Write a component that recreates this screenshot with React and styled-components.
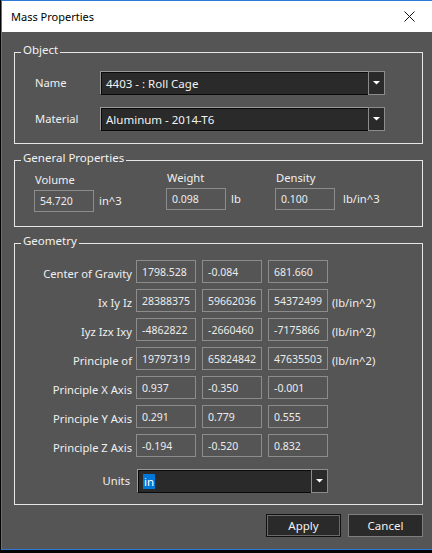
import React from "react";
import styled, { createGlobalStyle } from "styled-components";

const GlobalStyle = createGlobalStyle`
  html, body {
    margin: 0;
    padding: 0;
    background: #050505;
    overflow: hidden;
  }
  body {
    font-family: "Segoe UI", "Noto Sans", "Liberation Sans", sans-serif;
    font-size: 11.2px;
  }
`;

const Window = styled.div`
  margin-left: 1px;
  width: 440px;
  height: 550px;
  box-sizing: border-box;
  border: 1px solid #2c7ad6;
  border-right: none;
  background: #555555;
  display: flex;
  flex-direction: column;
`;

const TitleBar = styled.div`
  height: 31px;
  background: #ffffff;
  display: flex;
  align-items: center;
  padding-left: 9px;
  padding-right: 17px;
  width: 430px;
  box-sizing: border-box;
  justify-content: space-between;
  color: #000;
  font-size: 11px;
`;

const Body = styled.div`
  padding: 20px 0 0 12px;
  color: #f0f0f0;
`;

const Group = styled.div`
  position: relative;
  width: 409px;
  box-sizing: border-box;
  border: 1px solid #e6e6e6;
  margin-top: ${(p) => p.$top || 0}px;
  padding: ${(p) => p.$pad};
`;

const Legend = styled.div`
  position: absolute;
  top: -11px;
  left: 6px;
  padding: 0 2px;
  background: #555555;
  line-height: 16px;
  font-size: 11.5px;
  color: #f2f2f2;
`;

const FieldGrid = styled.div`
  display: grid;
  grid-template-columns: 65px 285px;
  row-gap: 12px;
  align-items: center;
`;

const Text = styled.span`
  line-height: 16px;
  white-space: nowrap;
`;

const Combo = styled.div`
  display: flex;
  width: ${(p) => p.$w}px;
  height: ${(p) => p.$h || 24}px;
`;

const ComboField = styled.div`
  flex: 1;
  background: #2a2a2a;
  border: 1px solid #9a9a9a;
  border-bottom-color: #0a0a0a;
  border-right: none;
  box-shadow: inset 1px 1px 0 #0a0a0a;
  display: flex;
  align-items: center;
  padding-left: 5px;
  font-size: 11.5px;
  color: #f2f2f2;
`;

const ComboButton = styled.div`
  width: 15px;
  background: #2a2a2a;
  border: 1px solid #8c8c8c;
  display: flex;
  align-items: center;
  justify-content: center;
`;

const Selected = styled.span`
  background: #0078d7;
  color: #fff;
  line-height: 15px;
  padding: 0 1px;
`;

const GenGrid = styled.div`
  display: grid;
  grid-template-columns: 132px 109px 1fr;
  align-items: start;
`;

const GenCol = styled.div`
  display: flex;
  flex-direction: column;
  gap: 2px;
  margin-top: ${(p) => p.$offset || 0}px;
`;

const GenLabel = styled(Text)`
  padding-left: 1px;
`;

const InputRow = styled.div`
  display: flex;
  align-items: center;
  gap: ${(p) => p.$gap || 5}px;
`;

const ValueBox = styled.div`
  width: 60px;
  height: ${(p) => p.$h || 22}px;
  box-sizing: border-box;
  border: 1px solid #8c8c8c;
  padding: 0 5px;
  display: flex;
  align-items: center;
  color: #ececec;
  font-size: 10.5px;
  white-space: nowrap;
  overflow: hidden;
`;

const GeoRows = styled.div`
  display: flex;
  flex-direction: column;
  gap: 6px;
`;

const GeoRow = styled.div`
  display: flex;
  align-items: ${(p) => (p.$center ? "center" : "flex-start")};
  margin-top: ${(p) => p.$top || 0}px;
`;

const RowLabel = styled(Text)`
  width: ${(p) => p.$w || 117}px;
  text-align: right;
  padding-top: ${(p) => (p.$center ? 0 : 6)}px;
  margin-right: ${(p) => p.$gap || 4}px;
`;

const Boxes = styled.div`
  display: flex;
  gap: 6px;
`;

const Unit = styled(Text)`
  padding-top: 6px;
  margin-left: 4px;
`;

const ButtonRow = styled.div`
  width: 409px;
  display: flex;
  justify-content: flex-end;
  gap: 7px;
  margin-top: 9px;
`;

const Button = styled.button`
  width: 75px;
  height: 23px;
  box-sizing: border-box;
  background: #2a2a2a;
  color: #f2f2f2;
  font-family: inherit;
  font-size: 11.5px;
  padding: 0;
  border: 1px solid ${(p) => (p.$primary ? "#111111" : "#7e7e7e")};
  box-shadow: ${(p) => (p.$primary ? "inset 0 0 0 1px #6a6a6a" : "none")};
`;

function Arrow() {
  return (
    <svg width="7" height="4" viewBox="0 0 7 4">
      <polygon points="0,0 7,0 3.5,3.5" fill="#ffffff" />
    </svg>
  );
}

function CloseIcon() {
  return (
    <svg width="11" height="11" viewBox="0 0 11 11">
      <path d="M0.5 0.5 L10.5 10.5 M10.5 0.5 L0.5 10.5" stroke="#111" strokeWidth="1" />
    </svg>
  );
}

function Dropdown({ width, height, children }) {
  return (
    <Combo $w={width} $h={height}>
      <ComboField>{children}</ComboField>
      <ComboButton>
        <Arrow />
      </ComboButton>
    </Combo>
  );
}

const geometry = [
  { label: "Center of Gravity", values: ["1798.528", "-0.084", "681.660"] },
  { label: "Ix Iy Iz", values: ["28388375", "59662036", "54372499"], unit: "(lb/in^2)" },
  { label: "Iyz Izx Ixy", values: ["-4862822", "-2660460", "-7175866"], unit: "(lb/in^2)" },
  { label: "Principle of", values: ["19797319", "65824842", "47635503"], unit: "(lb/in^2)" },
  { label: "Principle X Axis", values: ["0.937", "-0.350", "-0.001"] },
  { label: "Principle Y Axis", values: ["0.291", "0.779", "0.555"] },
  { label: "Principle Z Axis", values: ["-0.194", "-0.520", "0.832"] },
];

export default function App() {
  return (
    <>
      <GlobalStyle />
      <Window>
        <TitleBar>
          <span>Mass Properties</span>
          <CloseIcon />
        </TitleBar>
        <Body>
          <Group $pad="18px 0 12px 20px">
            <Legend>Object</Legend>
            <FieldGrid>
              <Text>Name</Text>
              <Dropdown width={285}>4403 - : Roll Cage</Dropdown>
              <Text>Material</Text>
              <Dropdown width={285}>Aluminum - 2014-T6</Dropdown>
            </FieldGrid>
          </Group>

          <Group $top={16} $pad="9px 0 14px 19px">
            <Legend>General Properties</Legend>
            <GenGrid>
              <GenCol $offset={2}>
                <GenLabel>Volume</GenLabel>
                <InputRow>
                  <ValueBox>54.720</ValueBox>
                  <Text>in^3</Text>
                </InputRow>
              </GenCol>
              <GenCol>
                <GenLabel>Weight</GenLabel>
                <InputRow>
                  <ValueBox>0.098</ValueBox>
                  <Text>lb</Text>
                </InputRow>
              </GenCol>
              <GenCol>
                <GenLabel>Density</GenLabel>
                <InputRow $gap={8}>
                  <ValueBox>0.100</ValueBox>
                  <Text>lb/in^3</Text>
                </InputRow>
              </GenCol>
            </GenGrid>
          </Group>

          <Group $top={16} $pad="16px 0 11px 0">
            <Legend>Geometry</Legend>
            <GeoRows>
              {geometry.map((row) => (
                <GeoRow key={row.label}>
                  <RowLabel>{row.label}</RowLabel>
                  <Boxes>
                    {row.values.map((v, i) => (
                      <ValueBox key={i} $h={23}>
                        {v}
                      </ValueBox>
                    ))}
                  </Boxes>
                  {row.unit && <Unit>{row.unit}</Unit>}
                </GeoRow>
              ))}
            </GeoRows>
            <GeoRow $center $top={12}>
              <RowLabel $center $w={115} $gap={7}>
                Units
              </RowLabel>
              <Dropdown width={191}>
                <Selected>in</Selected>
              </Dropdown>
            </GeoRow>
          </Group>

          <ButtonRow>
            <Button $primary>Apply</Button>
            <Button>Cancel</Button>
          </ButtonRow>
        </Body>
      </Window>
    </>
  );
}
